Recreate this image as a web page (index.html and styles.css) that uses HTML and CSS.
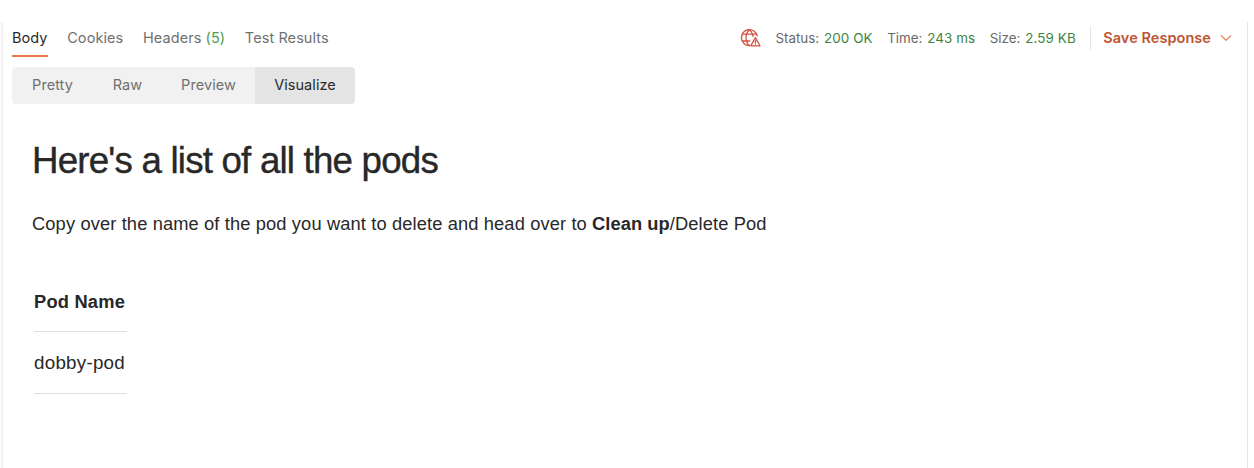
FILE: index.html
```html
<!DOCTYPE html>
<html lang="en">
<head>
<meta charset="utf-8">
<title>Response</title>
<link rel="stylesheet" href="styles.css">
</head>
<body>
<main class="panel">
  <header class="topbar">
    <nav class="tabs">
      <a class="tab tab-active">Body</a>
      <a class="tab">Cookies</a>
      <a class="tab">Headers <span class="count">(5)</span></a>
      <a class="tab">Test Results</a>
    </nav>
    <div class="meta">
      <svg class="globe" width="21" height="20" viewBox="0 0 21 20" fill="none" stroke="#d2503f" stroke-width="1.3" stroke-linejoin="round" stroke-linecap="round">
        <path d="M17.2 7.9A8 8 0 1 0 9.5 17.6"/>
        <path d="M9.5 1.7C4.8 5.8 4.8 13.5 9.5 17.6M9.5 1.7C11.6 3.5 12.8 5.8 13.1 8.3M2.4 6.2H16.6M2.4 13H9.8"/>
        <path d="M15.4 9.6L20 17.8H10.8Z"/>
        <path d="M15.4 12.7V14.7M15.4 16.1V16.2"/>
      </svg>
      <span class="stat">Status: <b>200 OK</b></span>
      <span class="stat">Time: <b>243 ms</b></span>
      <span class="stat">Size: <b>2.59 KB</b></span>
      <span class="divider"></span>
      <span class="save">Save Response</span>
      <svg class="chevron" width="12" height="8" viewBox="0 0 12 8" fill="none" stroke="#ea8460" stroke-width="1.3"><path d="M1 1.4L6 6.3L11 1.4"/></svg>
    </div>
  </header>
  <div class="modes">
    <span class="mode pretty">Pretty</span>
    <span class="mode raw">Raw</span>
    <span class="mode preview">Preview</span>
    <span class="mode mode-active">Visualize</span>
  </div>
  <section class="content">
    <h1 class="title">Here's a list of all the pods</h1>
    <p class="intro">Copy over the name of the pod you want to delete and head over to <strong>Clean up</strong>/Delete Pod</p>
    <div class="table">
      <div class="cell head">Pod Name</div>
      <div class="cell">dobby-pod</div>
    </div>
  </section>
</main>
</body>
</html>
```
FILE: styles.css
```css
* { box-sizing: border-box; }
body { margin: 0; padding: 22px 6px 0 1px; height: 468px; background: #fff; overflow: hidden; color: #282828; font-family: Inter, sans-serif; }
.panel { height: 446px; border-left: 2px solid #f2f2f2; border-right: 1px solid #e8e8e8; }
.topbar { display: flex; justify-content: space-between; height: 35px; padding: 0 15px 0 9px; }
.tabs { display: flex; gap: 19.6px; }
.tab { height: 35px; line-height: 31px; font-size: 14.5px; letter-spacing: 0.08px; color: #707070; white-space: nowrap; }
.tab-active { color: #2a2a2a; border-bottom: 2px solid #ea7650; }
.count { color: #4f9d55; }
.meta { display: flex; align-items: center; height: 32px; white-space: nowrap; font-size: 13.4px; color: #686868; }
.globe { margin-right: 14.5px; }
.stat { margin-right: 14.5px; }
.stat b { margin-left: 1px; font-weight: 400; letter-spacing: 0.1px; color: #3d8443; }
.divider { width: 1px; height: 24px; background: #e6e6e6; margin-right: 12px; }
.save { font-size: 14.5px; line-height: 18px; padding-bottom: 1px; font-weight: 600; letter-spacing: 0.05px; color: #bd5432; margin-right: 9px; }
.modes { display: flex; width: 343px; height: 37px; margin: 10px 0 0 9px; border-radius: 4px; overflow: hidden; background: #f1f1f1; font-size: 14.5px; line-height: 36px; letter-spacing: 0.06px; color: #707070; }
.mode { text-align: center; }
.pretty { width: 81px; }
.raw { width: 69px; }
.preview { width: 93px; }
.mode-active { width: 100px; background: #e4e4e4; color: #2a2a2a; }
.content { padding: 34px 0 0 29px; font-family: "Liberation Sans", Arial, sans-serif; }
.title { margin: 0; font-size: 36.7px; line-height: 46px; font-weight: 400; letter-spacing: -0.8px; white-space: nowrap; -webkit-text-stroke: 0.4px #282828; }
.intro { margin: 28px 0 0; font-size: 18.3px; line-height: 24px; letter-spacing: 0.125px; white-space: nowrap; }
.intro strong { letter-spacing: 0.05px; }
.table { width: 93px; margin: 39px 0 0 2px; font-size: 18.3px; white-space: nowrap; }
.cell { height: 62px; line-height: 62px; font-size: 18.8px; letter-spacing: 0.25px; border-bottom: 1px solid #dedede; }
.head { height: 57px; line-height: 54px; font-size: 18.3px; font-weight: 700; letter-spacing: 0.2px; }
```
